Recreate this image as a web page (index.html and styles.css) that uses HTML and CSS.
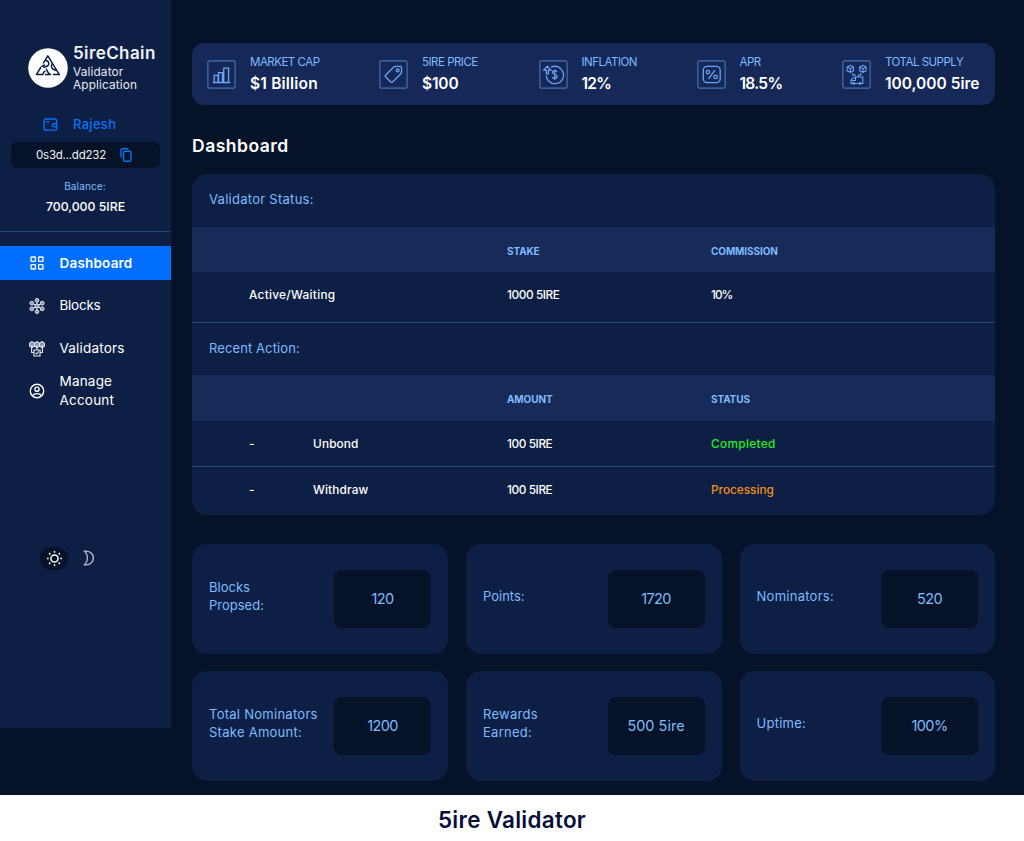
FILE: index.html
```html
<!DOCTYPE html>
<html lang="en">
<head>
<meta charset="utf-8">
<title>5ire Validator</title>
<link rel="stylesheet" href="styles.css">
</head>
<body>
<div class="app">
  <aside class="sidebar">
    <div class="brand">
      <svg class="brand-logo" viewBox="0 0 40 40"><circle cx="20" cy="20" r="19.8" fill="#fff"/><g fill="none" stroke="#0e1f45" stroke-width="1.5" stroke-linejoin="round"><path d="M15.2 15.4 19.8 7.8 31.4 26.6H25M13 19 8.4 26.6h6.4c.3-2 1-3 2.6-3.6"/><path d="M17.6 12.2c2.6.8 3.8 2.4 3 4.4-.8 1.8-3 2.4-5.4 2.6M13.4 18.6c1.2-.9 2.2-1.5 3.8-1.6M23.9 15.6c-1 2-.6 3.6.4 5 1.2 1 2.8 1.2 4 2M18.2 20.8c1.2 3 2 5.4 4.4 5.6H17"/></g></svg>
      <div class="brand-text"><div class="brand-name">5ireChain</div><div class="brand-sub">Validator<br>Application</div></div>
    </div>
    <div class="user">
      <svg class="wallet" viewBox="0 0 16 14" fill="none" stroke="#0673f8" stroke-width="1.5" stroke-linecap="round"><rect x="1" y="1" width="13.6" height="12" rx="2"/><path d="M3.8 4h2.4M14.5 6.2h-3a1.7 1.7 0 0 0 0 3.4h3"/></svg>
      <span>Rajesh</span>
    </div>
    <div class="address"><span>0s3d...dd232</span>
      <svg class="copy" viewBox="0 0 12 14" fill="none" stroke="#0673f8" stroke-width="1.4"><rect x="3.6" y="3.2" width="7.4" height="10" rx="1.5"/><path d="M1 9.5V2.3Q1 .8 2.5.8h6"/></svg>
    </div>
    <div class="balance-label">Balance:</div>
    <div class="balance">700,000 5IRE</div>
    <nav class="nav">
      <a class="nav-item active"><svg viewBox="0 0 16 16" fill="none" stroke="#fff" stroke-width="1.3"><rect x="2" y="2" width="4.4" height="4.4" rx=".6"/><rect x="9.6" y="2" width="4.4" height="4.4" rx=".6"/><rect x="2" y="9.6" width="4.4" height="4.4" rx=".6"/><rect x="9.6" y="9.6" width="4.4" height="4.4" rx=".6"/></svg><span>Dashboard</span></a>
      <a class="nav-item"><svg viewBox="0 0 16 16" fill="#8793ad" stroke="#e6eaf2" stroke-width="1"><path d="M8 2v12M3 5l10 6M13 5 3 11"/><circle cx="8" cy="8" r="2.1"/><circle cx="8" cy="2.3" r="1.8"/><circle cx="8" cy="13.7" r="1.8"/><circle cx="2.8" cy="5.2" r="1.9"/><circle cx="13.2" cy="5.2" r="1.9"/><circle cx="2.8" cy="10.8" r="1.9"/><circle cx="13.2" cy="10.8" r="1.9"/></svg><span class="tight">Blocks</span></a>
      <a class="nav-item"><svg viewBox="0 0 16 16" fill="none" stroke="#e6eaf2" stroke-width="1.1"><path fill="#7583a2" d="M.6 2.2 3 .7l2.4 1.5v3L3 6.7.6 5.2zM5.6 2.2 8 .7l2.4 1.5v3L8 6.7 5.6 5.2zM10.6 2.2 13 .7l2.4 1.5v3L13 6.7l-2.4-1.5z"/><path d="M3 3.5v3.2M8 3.5V9M13 3.5v3.2M2.6 6.5v5H5M13.4 6.5v5H11M5 9h6v6H5zM6.5 11.8l1.2 1.2 2-2.6"/></svg><span>Validators</span></a>
      <a class="nav-item"><svg viewBox="0 0 16 16" fill="none" stroke="#fff" stroke-width="1.4"><circle cx="8" cy="8" r="6.7"/><circle cx="8" cy="6.2" r="2.1"/><path d="M3.7 12.6c1.5-2.6 7.1-2.6 8.6 0"/></svg><span>Manage<br>Account</span></a>
    </nav>
    <div class="theme">
      <span class="sun"><svg viewBox="0 0 18 18" fill="none" stroke="#fff" stroke-width="1.6"><circle cx="9" cy="9" r="3.8"/><path d="M9 1v1.8M9 15.2V17M1 9h1.8M15.2 9H17M3.3 3.3l1.3 1.3M13.4 13.4l1.3 1.3M3.3 14.7l1.3-1.3M13.4 4.6l1.3-1.3"/></svg></span>
      <svg class="moon" viewBox="0 0 12 16" fill="none" stroke="#b9bcc2" stroke-width="1.3" stroke-linejoin="round"><path d="M1.2 1.2c4.7-.9 9.2 2.2 9.2 6.8s-4.5 7.7-9.2 6.8c4.2-2.8 4.2-10.8 0-13.6z"/></svg>
    </div>
  </aside>
  <main class="main">
    <section class="stats">
      <div class="stat"><svg class="stat-icon" viewBox="0 0 30 30"><rect x=".9" y=".9" width="28.2" height="28.2" rx="1.5"/><path d="M6 23.3h18M7.5 23v-7h4v7M12 23v-10h4v10M17.3 23V8.5h5V23"/></svg><div><div class="stat-label">MARKET CAP</div><div class="stat-value">$1 Billion</div></div></div>
      <div class="stat"><svg class="stat-icon" viewBox="0 0 30 30"><rect x=".9" y=".9" width="28.2" height="28.2" rx="1.5"/><path d="m6.7 15.8 8.6-8.6q.8-.7 1.8-.7h5.2q1 0 1 1v5q0 1-.7 1.7l-8.5 8.6q-.9.8-1.8 0l-5.6-5.4q-.8-.8 0-1.6z"/><circle cx="19.3" cy="10.8" r="1.5"/></svg><div><div class="stat-label">5IRE PRICE</div><div class="stat-value number">$100</div></div></div>
      <div class="stat"><svg class="stat-icon" viewBox="0 0 30 30"><rect x=".9" y=".9" width="28.2" height="28.2" rx="1.5"/><path d="M12.5 7.4a9 9 0 1 1-5 8.9"/><path d="M7.6 14.4v-4H5L8.6 6.4l3.6 4H9.8v4zM18.6 12.5c-.4-2-4.7-1.9-4.7.3s4.9 1.8 4.9 4.3-4.8 2.7-5.2.4M16.3 9.7v11"/></svg><div><div class="stat-label">INFLATION</div><div class="stat-value percent">12%</div></div></div>
      <div class="stat"><svg class="stat-icon" viewBox="0 0 30 30"><rect x=".9" y=".9" width="28.2" height="28.2" rx="1.5"/><rect x="6.5" y="6.5" width="17.5" height="17" rx="4"/><path d="m18.5 10.5-6.5 9"/><circle cx="11.3" cy="12.5" r="1.8"/><circle cx="19.2" cy="17.5" r="1.8"/></svg><div><div class="stat-label">APR</div><div class="stat-value percent">18.5%</div></div></div>
      <div class="stat"><svg class="stat-icon fine" viewBox="0 0 30 30"><rect x=".9" y=".9" width="28.2" height="28.2" rx="1.5"/><path d="m5.3 7.2 3.4-1.7 3.2 1.7v4l-3.2 1.7-3.4-1.7zM5.3 7.2l3.4 1.8 3.2-1.8M8.7 9v3.8M18.3 7.2l3.4-1.7 3.2 1.7v4l-3.2 1.7-3.4-1.7zM18.3 7.2l3.4 1.8 3.2-1.8M21.7 9v3.8M11 13.5v2h2.5v1.8M19.5 13.5v2H17v1.8M14 17.5h7.5v6.8H9.3v-3.7l2-1.9H14M14 17.5v3.7H9.5"/><circle cx="12" cy="24.2" r=".8"/><circle cx="18.7" cy="24.2" r=".8"/></svg><div><div class="stat-label">TOTAL SUPPLY</div><div class="stat-value supply">100,000 5ire</div></div></div>
    </section>
    <h1 class="title">Dashboard</h1>
    <section class="panel">
      <h2 class="panel-title">Validator Status:</h2>
      <div class="row head"><span></span><span></span><span>STAKE</span><span>COMMISSION</span></div>
      <div class="row status"><span class="wide">Active/Waiting</span><span class="amount">1000 5IRE</span><span class="share">10%</span></div>
      <h2 class="panel-title second">Recent Action:</h2>
      <div class="row head tall"><span></span><span></span><span>AMOUNT</span><span>STATUS</span></div>
      <div class="row"><span>-</span><span>Unbond</span><span class="amount">100 5IRE</span><span class="done">Completed</span></div>
      <div class="row last"><span>-</span><span>Withdraw</span><span class="amount">100 5IRE</span><span class="pending">Processing</span></div>
    </section>
    <section class="cards">
      <div class="card"><span class="card-label short">Blocks<br>Propsed:</span><span class="card-value">120</span></div>
      <div class="card"><span class="card-label short">Points:</span><span class="card-value">1720</span></div>
      <div class="card"><span class="card-label">Nominators:</span><span class="card-value">520</span></div>
      <div class="card"><span class="card-label">Total Nominators<br>Stake Amount:</span><span class="card-value">1200</span></div>
      <div class="card"><span class="card-label">Rewards<br>Earned:</span><span class="card-value reward">500 5ire</span></div>
      <div class="card"><span class="card-label">Uptime:</span><span class="card-value">100%</span></div>
    </section>
  </main>
</div>
<footer class="caption">5ire Validator</footer>
</body>
</html>
```
FILE: styles.css
```css
* { box-sizing: border-box; }
body { margin: 0; font-family: Inter, sans-serif; color: #fff; background: #fff; height: 841px; overflow: hidden; }
h1, h2 { margin: 0; }
svg { display: block; flex: none; }
.app { display: flex; align-items: flex-start; height: 794.5px; background: #061228; }

.sidebar { width: 170.5px; height: 728px; background: #0e1f45; flex: none; padding-top: 43px; }
.brand { display: flex; gap: 5px; padding-left: 28px; height: 68px; }
.brand-logo { width: 40px; height: 40px; margin-top: 4.5px; }
.brand-name { font-size: 17px; font-weight: 600; line-height: 20px; letter-spacing: .4px; color: #f1f3f8; }
.brand-sub { font-size: 11.8px; line-height: 13.5px; letter-spacing: .15px; color: #e6e9f1; margin-top: 2.5px; }
.user { display: flex; align-items: center; gap: 15px; padding-left: 43px; height: 26px; color: #0673f8; font-size: 13px; font-weight: 500; letter-spacing: .3px; }
.wallet { width: 15px; height: 13px; }
.address { display: flex; align-items: center; gap: 14px; margin: 5px 11px 0 11px; height: 26px; padding-left: 25px; border-radius: 6px; background: #061228; font-size: 11.5px; color: #eef1f7; }
.address span { letter-spacing: -.22px; }
.copy { width: 12px; height: 14px; }
.balance-label { margin-top: 11px; width: 170px; text-align: center; font-size: 10px; line-height: 14px; letter-spacing: .15px; color: #7dbcff; }
.balance { margin-top: 6px; width: 171px; text-align: center; font-size: 12.3px; font-weight: 500; line-height: 16px; height: 31.5px; }
.nav { padding-top: 14.5px; border-top: 1px solid #294374; }
.nav-item { display: flex; align-items: center; gap: 14.5px; height: 34px; padding-left: 29px; margin-bottom: 8.8px; font-size: 13.5px; line-height: 19px; letter-spacing: .2px; }
.nav-item svg { width: 16px; height: 16px; }
.nav-item.active { background: #006fff; font-weight: 600; }
.nav-item .tight { letter-spacing: -.25px; }
.theme { display: flex; align-items: center; gap: 15px; padding-left: 40px; margin-top: 138.5px; }
.sun { width: 28px; height: 23px; border-radius: 12px; background: #061228; display: flex; align-items: center; justify-content: center; }
.sun svg { width: 17px; height: 17px; }
.moon { width: 12px; height: 16px; }

.main { width: 824.5px; padding: 43px 0 0 21.5px; }
.stats { display: grid; grid-template-columns: 172px 159.5px 158px 145.5px auto; height: 62px; padding-left: 15px; background: #152857; border-radius: 12px; }
.stat { display: flex; gap: 14px; padding-top: 11px; white-space: nowrap; }
.stat-icon { width: 29px; height: 29px; margin-top: 5.5px; fill: none; stroke: #69a5f3; stroke-width: 1.35; }
.stat-icon.fine { stroke-width: 1.1; }
.stat-icon rect:first-child { stroke: #4773b5; stroke-width: 1.2; }
.stat-label { font-size: 11.5px; line-height: 16px; letter-spacing: -.5px; color: #7dbcff; }
.stat-value { font-size: 15.5px; font-weight: 600; line-height: 22px; margin-top: 3px; letter-spacing: .2px; }
.stat-value.number { letter-spacing: -.15px; }
.stat-value.percent { letter-spacing: -.7px; }
.stat-value.supply { letter-spacing: 0; }
.title { font-size: 17.5px; line-height: 26px; font-weight: 600; letter-spacing: .5px; margin-top: 28px; }
.panel { margin-top: 15px; height: 341px; border-radius: 15px; overflow: hidden; background: #0e1f45; }
.panel-title { height: 53px; padding: 0 17px; font-size: 13px; line-height: 51px; letter-spacing: .27px; font-weight: 400; color: #7dbcff; }
.panel-title.second { height: 52px; letter-spacing: .1px; }
.row { display: grid; grid-template-columns: 64px 194px 204px 1fr; align-items: center; height: 46px; padding-left: 57px; font-size: 11.8px; font-weight: 500; letter-spacing: .15px; border-bottom: 1px solid #2a4780; }
.wide { grid-column: span 2; letter-spacing: .3px; }
.amount { letter-spacing: -.4px; }
.share { letter-spacing: -1px; }
.row.head { height: 45px; background: #182a57; border: 0; font-size: 10px; font-weight: 700; letter-spacing: -.1px; color: #7dbcff; padding-top: 3px; }
.row.head.tall { height: 46px; padding-top: 2px; }
.row.status { height: 51px; padding-bottom: 4px; }
.row.last { border: 0; }
.done { color: #25ee1d; letter-spacing: .35px; }
.pending { color: #f58e13; letter-spacing: 0; }
.cards { display: grid; grid-template-columns: 256px 255.5px 255.5px; gap: 17px 18px; margin-top: 29px; }
.card { display: flex; align-items: center; justify-content: space-between; height: 110px; padding: 0 17px; border-radius: 15px; background: #0e1f45; }
.card-label { font-size: 13px; line-height: 18.5px; letter-spacing: .27px; color: #7dbcff; padding-bottom: 6px; white-space: nowrap; }
.card-label.short { letter-spacing: 0; }
.card-value { width: 97px; height: 58px; padding-bottom: 1px; border-radius: 8px; background: #061228; color: #7dbcff; font-size: 14.5px; letter-spacing: -.6px; display: flex; align-items: center; justify-content: center; }
.card-value.reward { letter-spacing: 0; }
.caption { height: 46.5px; line-height: 50px; text-align: center; font-size: 22.4px; letter-spacing: .3px; font-weight: 600; color: #070d39; }
```
